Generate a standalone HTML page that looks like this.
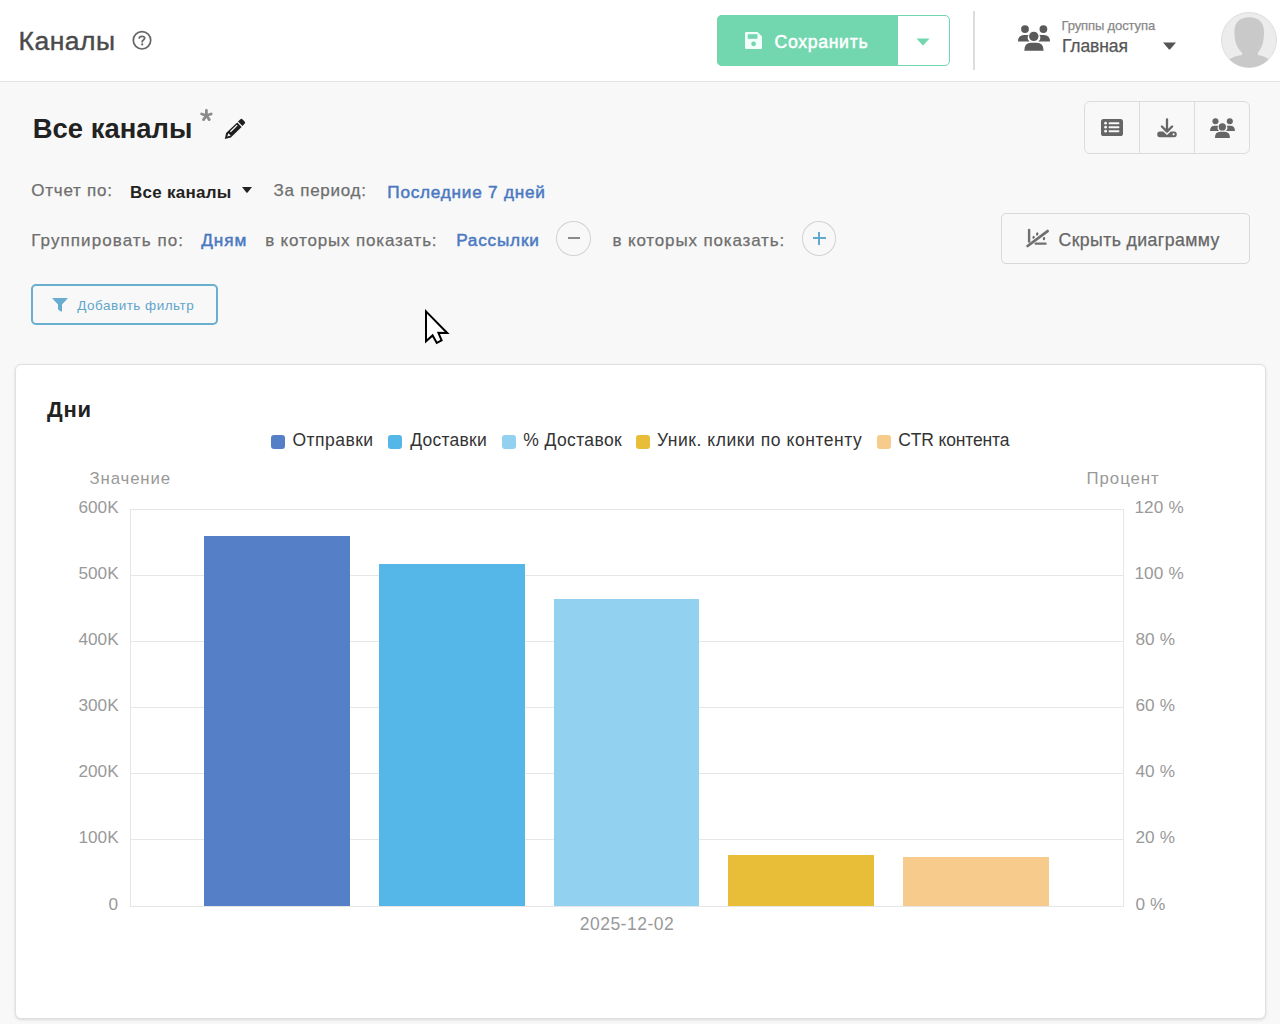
<!DOCTYPE html>
<html><head><meta charset="utf-8"><style>
*{box-sizing:border-box}
html,body{margin:0;padding:0}
body{width:1280px;height:1024px;position:relative;overflow:hidden;background:#f8f8f8;font-family:"Liberation Sans",sans-serif}
.a{position:absolute}
.t{position:absolute;line-height:1;white-space:pre;font-family:"Liberation Sans",sans-serif}
svg{position:absolute;overflow:visible}
</style></head>
<body>
<div class="a" style="left:0;top:0;width:1280px;height:81px;background:#fff"></div>
<div class="a" style="left:0;top:81px;width:1280px;height:1px;background:#e3e3e3"></div>
<svg style="left:132px;top:30px" width="20" height="20" viewBox="0 0 20 20"><circle cx="10" cy="10.3" r="8.7" fill="none" stroke="#666" stroke-width="1.7"/><path d="M7.3 7.9 C7.3 5.9 12.7 5.6 12.7 8.1 C12.7 9.6 10.2 10.1 10.2 11.8" fill="none" stroke="#666" stroke-width="1.8" stroke-linecap="round"/><circle cx="10.2" cy="14.4" r="1.1" fill="#666"/></svg>
<div class="a" style="left:717px;top:15px;width:233px;height:51px;border:1.8px solid #72d6ae;border-radius:5px;background:#fff"></div>
<div class="a" style="left:717px;top:15px;width:181px;height:51px;border-radius:5px 0 0 5px;background:#72d6ae"></div>
<svg style="left:745px;top:32px" width="17" height="17" viewBox="0 0 17 17"><path d="M1.2 0 H12.5 L17 4.5 V15.8 Q17 17 15.8 17 H1.2 Q0 17 0 15.8 V1.2 Q0 0 1.2 0 Z" fill="#f2fffa"/><rect x="2.8" y="2.2" width="9.6" height="4.6" fill="#72d6ae"/><circle cx="8.6" cy="11.8" r="2.4" fill="#72d6ae"/></svg>
<svg style="left:916px;top:38px" width="14" height="8" viewBox="0 0 14 8"><path d="M0.5 0.5 H13.5 L7.8 6.8 Q7 7.5 6.2 6.8 Z" fill="#72d6ae"/></svg>
<div class="a" style="left:973px;top:11px;width:2px;height:59px;background:#dcdcdc"></div>
<svg style="left:1018px;top:25px" width="32.0" height="26.0" viewBox="0 0 32 26"><circle cx="7" cy="4.1" r="3.9" fill="#5a5a5a"/><circle cx="25.4" cy="4.1" r="3.9" fill="#5a5a5a"/><circle cx="15.8" cy="11.4" r="4.7" fill="#5a5a5a"/><path d="M0 16.6 Q0 10 6 10 H10.6 Q9.2 11.6 9.8 14 Q10.5 15.8 11.8 16.6 Z" fill="#5a5a5a"/><path d="M32 16.6 Q32 10 26 10 H21.4 Q22.8 11.6 22.2 14 Q21.5 15.8 20.2 16.6 Z" fill="#5a5a5a"/><path d="M6.3 25.8 Q6.3 17.8 13 17.8 H18.6 Q25.6 17.8 25.6 25.8 Z" fill="#5a5a5a"/></svg>
<svg style="left:1163px;top:42px" width="13" height="8" viewBox="0 0 13 8"><path d="M0 0.5 H13 L7.2 7.2 Q6.5 7.9 5.8 7.2 Z" fill="#555"/></svg>
<svg style="left:1221px;top:12px" width="56" height="56" viewBox="0 0 56 56"><defs><clipPath id="av"><circle cx="28" cy="28" r="27.5"/></clipPath></defs><circle cx="28" cy="28" r="27.5" fill="#ececec" stroke="#dedede" stroke-width="1"/><g clip-path="url(#av)"><path d="M21.2 41 C16 36 13.4 30 13.4 20 C13.4 10 19 5.2 28.2 5.2 C37.5 5.2 43 10 43 20 C43 30 41 36 36.8 41 L37 43 C42 44 46 45 50 50 L56 60 H0 L6 50 C10 45 15 44 21 43 Z" fill="#c9c9c9"/></g></svg>
<svg style="left:200px;top:108.8px" width="13" height="13" viewBox="0 0 13 13"><path d="M6.4 6.5 L6.4 1.4 M6.4 6.5 L11.2 5 M6.4 6.5 L9.3 10.6 M6.4 6.5 L3.5 10.6 M6.4 6.5 L1.6 5" stroke="#8a8a8a" stroke-width="2.8" stroke-linecap="round"/></svg>
<svg style="left:224px;top:118px" width="22" height="21" viewBox="0 0 22 21"><path d="M16.2 1.4 Q17.4 0.2 18.6 1.4 L20.6 3.4 Q21.8 4.6 20.6 5.8 L18.4 8 L14 3.6 Z" fill="#1e1e1e"/><path d="M13.2 4.6 L17.6 9 L6.8 19.6 L0.8 20.9 L2.1 14.9 Z" fill="#1e1e1e"/><path d="M4.4 15.2 L6.8 17.4 L3.2 18.6 Z" fill="#f8f8f8"/><path d="M13.2 7.1 L6.4 13.8" stroke="#f8f8f8" stroke-width="1.3"/></svg>
<div class="a" style="left:1084px;top:101px;width:166px;height:53px;border:1px solid #dcdcdc;border-radius:6px"></div>
<div class="a" style="left:1139px;top:102px;width:1px;height:51px;background:#dcdcdc"></div>
<div class="a" style="left:1194px;top:102px;width:1px;height:51px;background:#dcdcdc"></div>
<svg style="left:1101px;top:119px" width="22" height="17" viewBox="0 0 22 17"><rect x="0" y="0" width="22" height="17" rx="2.6" fill="#666"/><circle cx="4.6" cy="4.2" r="1.4" fill="#f8f8f8"/><circle cx="4.6" cy="8.2" r="1.4" fill="#f8f8f8"/><circle cx="4.6" cy="12.2" r="1.4" fill="#f8f8f8"/><rect x="7.6" y="3.2" width="10.8" height="2" rx="0.8" fill="#f8f8f8"/><rect x="7.6" y="7.2" width="10.8" height="2" rx="0.8" fill="#f8f8f8"/><rect x="7.6" y="11.2" width="10.8" height="2" rx="0.8" fill="#f8f8f8"/></svg>
<svg style="left:1157px;top:118px" width="20" height="20" viewBox="0 0 20 20"><path d="M10 1.3 V13.3 M4.9 8.5 L10 13.6 L15.1 8.5" stroke="#666" stroke-width="2.3" stroke-linecap="round" stroke-linejoin="round" fill="none"/><path d="M2.8 13.4 H6.2 L10 17 L13.8 13.4 H17.2 Q19.8 13.4 19.8 16.3 Q19.8 19.2 17.2 19.2 H2.8 Q0.2 19.2 0.2 16.3 Q0.2 13.4 2.8 13.4 Z" fill="#666"/><circle cx="16.6" cy="16.3" r="1.1" fill="#f8f8f8"/></svg>
<svg style="left:1210px;top:118px" width="24.96" height="20.28" viewBox="0 0 32 26"><circle cx="7" cy="4.1" r="3.9" fill="#666"/><circle cx="25.4" cy="4.1" r="3.9" fill="#666"/><circle cx="15.8" cy="11.4" r="4.7" fill="#666"/><path d="M0 16.6 Q0 10 6 10 H10.6 Q9.2 11.6 9.8 14 Q10.5 15.8 11.8 16.6 Z" fill="#666"/><path d="M32 16.6 Q32 10 26 10 H21.4 Q22.8 11.6 22.2 14 Q21.5 15.8 20.2 16.6 Z" fill="#666"/><path d="M6.3 25.8 Q6.3 17.8 13 17.8 H18.6 Q25.6 17.8 25.6 25.8 Z" fill="#666"/></svg>
<svg style="left:242px;top:187px" width="10" height="6" viewBox="0 0 10 6"><path d="M0 0 H10 L5.6 5.4 Q5 6 4.4 5.4 Z" fill="#222"/></svg>
<div class="a" style="left:556.2px;top:221px;width:34.5px;height:34.8px;border:1px solid #d2d2d2;border-radius:50%"></div>
<div class="a" style="left:567.5px;top:237px;width:12.5px;height:2px;background:#8a8a8a"></div>
<div class="a" style="left:801.5px;top:221px;width:34.5px;height:34.8px;border:1px solid #d2d2d2;border-radius:50%"></div>
<div class="a" style="left:812.5px;top:237.2px;width:13px;height:2px;background:#62a9d2"></div>
<div class="a" style="left:818px;top:232px;width:2px;height:13px;background:#62a9d2"></div>
<div class="a" style="left:1001px;top:213px;width:249px;height:51px;border:1px solid #d8d8d8;border-radius:5px"></div>
<svg style="left:1026px;top:229px" width="23" height="19" viewBox="0 0 23 19"><path d="M3.1 1 V12.6" stroke="#707070" stroke-width="2.4" stroke-linecap="round"/><path d="M1.6 17 L21.6 2.1" stroke="#707070" stroke-width="2.8" stroke-linecap="round"/><path d="M9.6 14.7 H19.6" stroke="#707070" stroke-width="2.2" stroke-linecap="round"/><ellipse cx="7.6" cy="8.3" rx="1.1" ry="1.5" fill="#666" transform="rotate(25 7.6 8.3)"/><ellipse cx="11.2" cy="5" rx="1.1" ry="1.7" fill="#666" transform="rotate(20 11.2 5)"/><ellipse cx="18" cy="9.6" rx="1.1" ry="1.7" fill="#666" transform="rotate(15 18 9.6)"/></svg>
<div class="a" style="left:31px;top:284px;width:187px;height:41px;border:2px solid #6aaed0;border-radius:5px"></div>
<svg style="left:52px;top:298px" width="16" height="14" viewBox="0 0 16 14"><path d="M0.4 0.6 Q0 0 0.8 0 H15.2 Q16 0 15.6 0.6 L10 6.4 V13 Q10 14 9 13.4 L6.6 12 Q6 11.6 6 11 V6.4 Z" fill="#69acd0"/></svg>
<div class="a" style="left:15px;top:364px;width:1251px;height:655px;background:#fff;border:1px solid #e0e0e0;border-radius:6px;box-shadow:0 1px 3px rgba(0,0,0,0.12)"></div>
<div class="a" style="left:270.9px;top:434.7px;width:14px;height:14px;border-radius:3px;background:#5580c8"></div>
<div class="a" style="left:387.8px;top:434.7px;width:14px;height:14px;border-radius:3px;background:#55b7e8"></div>
<div class="a" style="left:501.7px;top:434.7px;width:14px;height:14px;border-radius:3px;background:#92d2f0"></div>
<div class="a" style="left:635.8px;top:434.7px;width:14px;height:14px;border-radius:3px;background:#e8bd37"></div>
<div class="a" style="left:877.2px;top:434.7px;width:14px;height:14px;border-radius:3px;background:#f7cb8c"></div>
<div class="a" style="left:130px;top:508.50px;width:994px;height:1px;background:#e6e6e6"></div>
<div class="a" style="left:130px;top:574.67px;width:994px;height:1px;background:#e6e6e6"></div>
<div class="a" style="left:130px;top:640.83px;width:994px;height:1px;background:#e6e6e6"></div>
<div class="a" style="left:130px;top:707.00px;width:994px;height:1px;background:#e6e6e6"></div>
<div class="a" style="left:130px;top:773.17px;width:994px;height:1px;background:#e6e6e6"></div>
<div class="a" style="left:130px;top:839.33px;width:994px;height:1px;background:#e6e6e6"></div>
<div class="a" style="left:130px;top:905.50px;width:994px;height:1px;background:#e6e6e6"></div>
<div class="a" style="left:130px;top:508.5px;width:1px;height:398px;background:#e6e6e6"></div>
<div class="a" style="left:1123.2px;top:508.5px;width:1px;height:398px;background:#e6e6e6"></div>
<div class="a" style="left:204.4px;top:536.2px;width:145.6px;height:369.4px;background:#5580c8"></div>
<div class="a" style="left:379.0px;top:563.7px;width:145.5px;height:341.9px;background:#55b7e8"></div>
<div class="a" style="left:553.6px;top:599.3px;width:145.2px;height:306.3px;background:#92d2f0"></div>
<div class="a" style="left:728.2px;top:855.2px;width:145.8px;height:50.4px;background:#e8bd37"></div>
<div class="a" style="left:902.8px;top:857.0px;width:146.2px;height:48.6px;background:#f7cb8c"></div>
<svg style="left:420px;top:305px" width="36" height="46" viewBox="420 305 36 46"><path d="M426 311.4 L447.2 333 L438.4 332.8 L441.6 340.4 L436.8 342.9 L432.6 335.4 L426 341.2 Z" fill="#fff" stroke="#000" stroke-width="2" stroke-linejoin="miter"/></svg>
<span class="t" style="left:18.5px;top:28.3px;font-size:26.5px;font-weight:400;color:#4a4a4a;letter-spacing:0.5px;-webkit-text-stroke:0.4px #4a4a4a">Каналы</span>
<span class="t" style="left:774.6px;top:33.8px;font-size:17.7px;font-weight:400;color:#ffffff;letter-spacing:0.638px;-webkit-text-stroke:0.5px #ffffff">Сохранить</span>
<span class="t" style="left:1061.5px;top:18.7px;font-size:13px;font-weight:400;color:#888888;letter-spacing:-0.115px;-webkit-text-stroke:0.25px #888888">Группы доступа</span>
<span class="t" style="left:1061.9px;top:37.9px;font-size:17.5px;font-weight:400;color:#555555;letter-spacing:-0.083px;-webkit-text-stroke:0.25px #555555">Главная</span>
<span class="t" style="left:32.7px;top:114.9px;font-size:27.4px;font-weight:700;color:#222222;letter-spacing:0.033px">Все каналы</span>
<span class="t" style="left:31.2px;top:181.8px;font-size:17px;font-weight:400;color:#6e6e6e;letter-spacing:0.775px;-webkit-text-stroke:0.25px #6e6e6e">Отчет по:</span>
<span class="t" style="left:130px;top:183.7px;font-size:17px;font-weight:700;color:#222222;letter-spacing:0.256px">Все каналы</span>
<span class="t" style="left:273.6px;top:181.8px;font-size:17px;font-weight:400;color:#6e6e6e;letter-spacing:0.733px;-webkit-text-stroke:0.25px #6e6e6e">За период:</span>
<span class="t" style="left:387.3px;top:184.4px;font-size:17.2px;font-weight:400;color:#4b79c1;letter-spacing:0.76px;-webkit-text-stroke:0.5px #4b79c1">Последние 7 дней</span>
<span class="t" style="left:31.2px;top:231.5px;font-size:17px;font-weight:400;color:#6e6e6e;letter-spacing:1.087px;-webkit-text-stroke:0.25px #6e6e6e">Группировать по:</span>
<span class="t" style="left:201.2px;top:231.5px;font-size:17.2px;font-weight:400;color:#4b79c1;letter-spacing:0.967px;-webkit-text-stroke:0.5px #4b79c1">Дням</span>
<span class="t" style="left:265.2px;top:231.5px;font-size:17px;font-weight:400;color:#6e6e6e;letter-spacing:0.833px;-webkit-text-stroke:0.25px #6e6e6e">в которых показать:</span>
<span class="t" style="left:456.2px;top:231.5px;font-size:17.2px;font-weight:400;color:#4b79c1;letter-spacing:0.786px;-webkit-text-stroke:0.5px #4b79c1">Рассылки</span>
<span class="t" style="left:612.5px;top:231.5px;font-size:17px;font-weight:400;color:#6e6e6e;letter-spacing:0.847px;-webkit-text-stroke:0.25px #6e6e6e">в которых показать:</span>
<span class="t" style="left:1058.5px;top:232px;font-size:17.7px;font-weight:400;color:#666666;letter-spacing:0.4px;-webkit-text-stroke:0.25px #666666">Скрыть диаграмму</span>
<span class="t" style="left:77.3px;top:298.8px;font-size:13.5px;font-weight:400;color:#5fa6cc;letter-spacing:0.486px">Добавить фильтр</span>
<span class="t" style="left:47px;top:398.8px;font-size:22px;font-weight:700;color:#222222;letter-spacing:0.75px">Дни</span>
<span class="t" style="left:292.5px;top:432px;font-size:17.5px;font-weight:400;color:#333333;letter-spacing:0.471px">Отправки</span>
<span class="t" style="left:410.2px;top:432px;font-size:17.5px;font-weight:400;color:#333333;letter-spacing:0.257px">Доставки</span>
<span class="t" style="left:523.3px;top:432px;font-size:17.5px;font-weight:400;color:#333333;letter-spacing:0.378px">% Доставок</span>
<span class="t" style="left:656.9px;top:432px;font-size:17.5px;font-weight:400;color:#333333;letter-spacing:0.55px">Уник. клики по контенту</span>
<span class="t" style="left:898.3px;top:432px;font-size:17.5px;font-weight:400;color:#333333;letter-spacing:-0.155px">CTR контента</span>
<span class="t" style="left:89.6px;top:471px;font-size:16.8px;font-weight:400;color:#999999;letter-spacing:0.857px">Значение</span>
<span class="t" style="left:1086.5px;top:470.9px;font-size:16.8px;font-weight:400;color:#999999;letter-spacing:0.967px">Процент</span>
<span class="t" style="left:579.7px;top:915.75px;font-size:17.5px;font-weight:400;color:#999999;letter-spacing:0.5px">2025-12-02</span>
<span class="t" style="left:78.5px;top:498.5px;font-size:17.2px;font-weight:400;color:#999999;letter-spacing:0px">600K</span>
<span class="t" style="left:1134.4px;top:498.5px;font-size:17.2px;font-weight:400;color:#999999;letter-spacing:0.15px">120 %</span>
<span class="t" style="left:78.5px;top:564.67px;font-size:17.2px;font-weight:400;color:#999999;letter-spacing:0px">500K</span>
<span class="t" style="left:1134.4px;top:564.67px;font-size:17.2px;font-weight:400;color:#999999;letter-spacing:0.15px">100 %</span>
<span class="t" style="left:78.5px;top:630.83px;font-size:17.2px;font-weight:400;color:#999999;letter-spacing:0px">400K</span>
<span class="t" style="left:1135.4px;top:630.83px;font-size:17.2px;font-weight:400;color:#999999;letter-spacing:0.15px">80 %</span>
<span class="t" style="left:78.5px;top:697.0px;font-size:17.2px;font-weight:400;color:#999999;letter-spacing:0px">300K</span>
<span class="t" style="left:1135.4px;top:697.0px;font-size:17.2px;font-weight:400;color:#999999;letter-spacing:0.15px">60 %</span>
<span class="t" style="left:78.5px;top:763.17px;font-size:17.2px;font-weight:400;color:#999999;letter-spacing:0px">200K</span>
<span class="t" style="left:1135.4px;top:763.17px;font-size:17.2px;font-weight:400;color:#999999;letter-spacing:0.15px">40 %</span>
<span class="t" style="left:78.5px;top:829.33px;font-size:17.2px;font-weight:400;color:#999999;letter-spacing:0px">100K</span>
<span class="t" style="left:1135.4px;top:829.33px;font-size:17.2px;font-weight:400;color:#999999;letter-spacing:0.15px">20 %</span>
<span class="t" style="left:108.5px;top:895.5px;font-size:17.2px;font-weight:400;color:#999999;letter-spacing:0px">0</span>
<span class="t" style="left:1135.4px;top:895.5px;font-size:17.2px;font-weight:400;color:#999999;letter-spacing:0.15px">0 %</span>
</body></html>
